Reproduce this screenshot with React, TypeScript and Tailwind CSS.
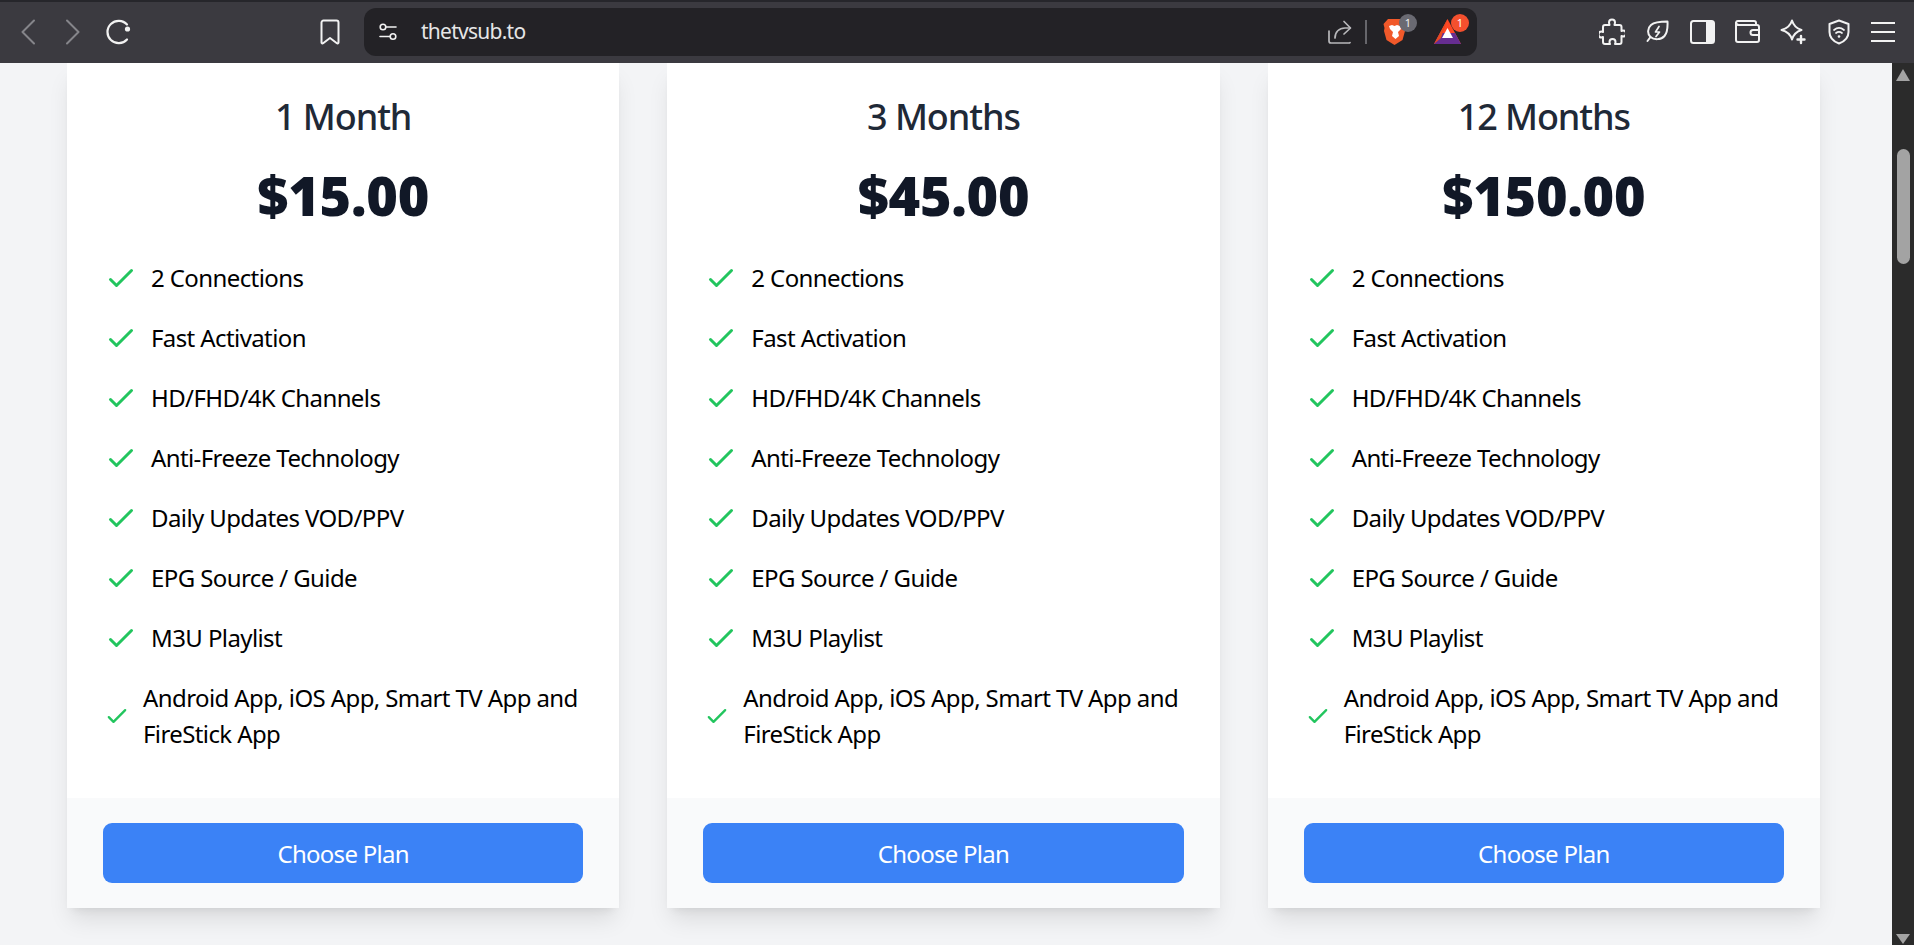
const features = [
  "2 Connections",
  "Fast Activation",
  "HD/FHD/4K Channels",
  "Anti-Freeze Technology",
  "Daily Updates VOD/PPV",
  "EPG Source / Guide",
  "M3U Playlist",
];

const plans = [
  { name: "1 Month", price: "$15.00" },
  { name: "3 Months", price: "$45.00" },
  { name: "12 Months", price: "$150.00" },
];

function Check({ className }: { className: string }) {
  return (
    <svg className={className} viewBox="0 0 24 24" fill="none" stroke="#22c55e" strokeWidth={2} strokeLinecap="round" strokeLinejoin="round">
      <path d="M5 13l4 4L19 7" />
    </svg>
  );
}

function Card({ name, price }: { name: string; price: string }) {
  return (
    <div className="bg-white shadow-[0_15px_22px_-4px_rgba(0,0,0,0.1),0_6px_9px_-6px_rgba(0,0,0,0.1)] flex flex-col">
      <div className="h-[735px] px-9 pt-[30px]">
        <h2 className="text-center text-[36px] leading-[48px] font-medium text-[#1f2937] tracking-[-0.03em]">{name}</h2>
        <p className="mt-6 text-center text-[54px] leading-[60px] font-black text-[#111827] tracking-[-0.005em]">{price}</p>
        <ul className="mt-[35px] flex flex-col gap-6 text-[24px] leading-[36px] text-black tracking-[-0.025em]">
          {features.map((f) => (
            <li key={f} className="flex items-center">
              <Check className="w-9 h-9 mr-3 shrink-0" />
              <span>{f}</span>
            </li>
          ))}
          <li className="flex items-center">
            <Check className="w-7 h-9 mr-3 shrink-0" />
            <span>Android App, iOS App, Smart TV App and FireStick App</span>
          </li>
        </ul>
      </div>
      <div className="bg-[#f9fafb] px-9 pt-[25px] pb-[25px]">
        <button className="w-full h-[60px] pt-[2px] rounded-[9px] bg-[#3b82f6] text-white text-[24px] tracking-[-0.03em]">Choose Plan</button>
      </div>
    </div>
  );
}

const stroke = { fill: "none", stroke: "#f2f2f2", strokeWidth: 2, strokeLinecap: "round" as const, strokeLinejoin: "round" as const };

export default function App() {
  return (
    <div className="w-[1914px] h-[945px] overflow-hidden flex flex-col bg-[#f3f4f6] font-['Noto_Sans',sans-serif]">
      <header className="relative z-10 h-[63px] shrink-0 bg-[#3b3a40] border-t-2 border-[#26262b] pb-[2px] flex items-center">
        <svg className="ml-[21px]" width="14" height="26" viewBox="0 0 14 26" fill="none" stroke="#85858a" strokeWidth="2" strokeLinecap="round" strokeLinejoin="round"><path d="M13 1.5 1.5 13 13 24.5" /></svg>
        <svg className="ml-[31px]" width="14" height="26" viewBox="0 0 14 26" fill="none" stroke="#85858a" strokeWidth="2" strokeLinecap="round" strokeLinejoin="round"><path d="M1 1.5 12.5 13 1 24.5" /></svg>
        <svg className="ml-[26px]" width="26" height="26" viewBox="0 0 26 26" {...stroke} strokeWidth="2.2">
          <path d="M21 5.5A11.2 11.2 0 1 0 21 20.5" />
          <circle cx="21.5" cy="10" r="2.6" fill="#f2f2f2" stroke="none" />
        </svg>
        <svg className="ml-[188px]" width="20" height="26" viewBox="0 0 20 26" {...stroke}><path d="M3.5 1.5h13a2 2 0 0 1 2 2V23.5a1 1 0 0 1-1.6.8L10 19l-6.9 5.3a1 1 0 0 1-1.6-.8V3.5a2 2 0 0 1 2-2Z" /></svg>
        <div className="ml-[24px] w-[1113px] h-[48px] rounded-[12px] bg-[#232226] flex items-center">
          <svg className="ml-[15px]" width="18" height="18" viewBox="0 0 18 18" {...stroke} strokeWidth="1.6">
            <circle cx="4" cy="4" r="2.8" /><path d="M7 4h10" />
            <circle cx="14" cy="13.5" r="2.8" /><path d="M1 13.5h10" />
          </svg>
          <span className="ml-[24px] text-[21px] text-[#e6e6e6] tracking-[-0.035em]">thetvsub.to</span>
          <svg className="ml-auto" width="24" height="24" viewBox="0 0 24 24" fill="none" stroke="#b8b8bb" strokeWidth="1.7" strokeLinecap="round" strokeLinejoin="round">
            <path d="M1 11v10a2 2 0 0 0 2 2h18a2 2 0 0 0 1-.4" />
            <path d="M7 18c0-6 4-10 10-10h5" />
            <path d="M16 1.5 22.5 8 16 14" />
          </svg>
          <div className="ml-[13px] w-[2px] h-[24px] bg-[#66666b]" />
          <div className="relative ml-[16px] w-[23px] h-[26px]">
            <svg width="23" height="26" viewBox="0 0 23 26">
              <path d="M5 0h13l4.500 5-1 4 .5 3-2.500 9-8 5-8-5-2.500-9 .5-3-1-4Z" fill="#f1592a" />
              <path d="M6 7l3-1 2.500 1 2.500-1 3 1 1 3-3 3 1 4-3.500 3-3.500-3 1-4-3-3Z" fill="#fff" />
            </svg>
            <span className="absolute -right-[11px] -top-[5px] w-[18px] h-[18px] rounded-full bg-[#6a6a72] text-[#f0f0f0] text-[11px] leading-[18px] text-center">1</span>
          </div>
          <div className="relative ml-[28px] mr-[16px] w-[27px] h-[25px]">
            <svg width="27" height="25" viewBox="0 0 27 25">
              <path d="M13.500 0 27 25H0Z" fill="#ff4724" />
              <path d="M0 25 6 14 21 14 27 25Z" fill="#662d91" />
              <path d="M13.500 0 7 12 0 25 7 19Z" fill="#e8491f" />
              <path d="M13.500 9 19 19H8Z" fill="#fff" />
            </svg>
            <span className="absolute -right-[8px] -top-[5px] w-[18px] h-[18px] rounded-full bg-[#f4502e] text-white text-[11px] leading-[18px] text-center">1</span>
          </div>
        </div>
        <svg className="ml-[122px]" width="26" height="27" viewBox="0 0 26 27" {...stroke}>
          <path d="M10 4.500a3 3 0 0 1 6 0c0 1-.5 1.500-.5 2.500h5a2 2 0 0 1 2 2v4c1-.5 1-.5 1.500-.5a3 3 0 0 1 0 6c-.5 0-.5 0-1.500-.5V24a2 2 0 0 1-2 2h-4.500c.5-1 .5-1.500.5-2a3 3 0 0 0-6 0c0 .5 0 1 .5 2H6a2 2 0 0 1-2-2v-5c-1 .5-1 .5-1.500.5a2.500 2.500 0 0 1 0-6c.5 0 .5 0 1.500.5V9a2 2 0 0 1 2-2h4.500c0-1-.5-1.500-.5-2.500Z" />
        </svg>
        <svg className="ml-[21px]" width="23" height="23" viewBox="0 0 23 23" {...stroke}>
          <path d="M21.500 1.500C21.500 1.500 22 12 18.500 16 15 20 8 20 4.500 17 1 14 1.500 8 5 5 9 1.500 21.500 1.500 21.500 1.500Z" />
          <path d="M4.500 17 1.500 21" />
          <path d="M13 6.500 9.500 12h4L10 16.500" strokeWidth="1.7" />
        </svg>
        <svg className="ml-[21px]" width="25" height="24" viewBox="0 0 25 24">
          <rect x="1" y="1" width="23" height="22" rx="2.500" fill="none" stroke="#f2f2f2" strokeWidth="2" />
          <path d="M16 1h6a2 2 0 0 1 2 2v18a2 2 0 0 1-2 2h-6Z" fill="#f2f2f2" />
        </svg>
        <svg className="ml-[20px]" width="25" height="23" viewBox="0 0 25 23" {...stroke}>
          <path d="M21 5H4a3 3 0 0 1-3-2.500A2 2 0 0 1 3 1h16a2 2 0 0 1 2 2Z" />
          <path d="M1 3v17a2 2 0 0 0 2 2h19a2 2 0 0 0 2-2V7a2 2 0 0 0-2-2" />
          <path d="M24 10h-6a2.500 2.500 0 0 0-2.500 2.500v0A2.500 2.500 0 0 0 18 15h6" />
        </svg>
        <svg className="ml-[20px]" width="26" height="26" viewBox="0 0 26 26" {...stroke}>
          <path d="M12 1.500c1.500 5 4.500 8 9.500 9.500-5 1.500-8 4.500-9.500 9.500C10.500 15.500 7.500 12.500 1.500 11 7.500 9.500 10.500 6.500 12 1.500Z" />
          <path d="M21 17v7M17.500 20.500h7" strokeWidth="2.400" />
        </svg>
        <svg className="ml-[22px]" width="22" height="26" viewBox="0 0 22 26" {...stroke}>
          <path d="M11 1.500 20.500 5v8c0 6-4 9.500-9.500 11.500C5.500 22.500 1.500 19 1.500 13V5Z" />
          <path d="M6 11c3-2.500 7-2.500 10 0M8 14c2-1.500 4-1.500 6 0" strokeWidth="1.700" />
          <circle cx="11" cy="17.500" r="1.300" fill="#f2f2f2" stroke="none" />
        </svg>
        <div className="ml-[21px] w-[20px] shrink-0 flex flex-col gap-[7px] overflow-visible">
          <div className="w-[24px] h-[2px] bg-[#f2f2f2]" />
          <div className="w-[24px] h-[2px] bg-[#f2f2f2]" />
          <div className="w-[24px] h-[2px] bg-[#f2f2f2]" />
        </div>
      </header>
      <div className="flex-1 flex min-h-0">
        <main className="flex-1 overflow-hidden pl-[67px] pr-[72px] grid grid-cols-3 gap-x-12 content-start">
          {plans.map((p) => (
            <Card key={p.name} name={p.name} price={p.price} />
          ))}
        </main>
        <aside className="w-[22px] shrink-0 bg-[#2b2b2b] flex flex-col items-center pt-[6px] pb-[1px]">
          <div className="w-0 h-0 border-l-[7px] border-r-[7px] border-b-[12px] border-l-transparent border-r-transparent border-b-[#a3a3a3]" />
          <div className="mt-[68px] w-[13px] h-[115px] rounded-full bg-[#a3a3a3]" />
          <div className="mt-auto w-0 h-0 border-l-[7px] border-r-[7px] border-t-[10px] border-l-transparent border-r-transparent border-t-[#a3a3a3]" />
        </aside>
      </div>
    </div>
  );
}
